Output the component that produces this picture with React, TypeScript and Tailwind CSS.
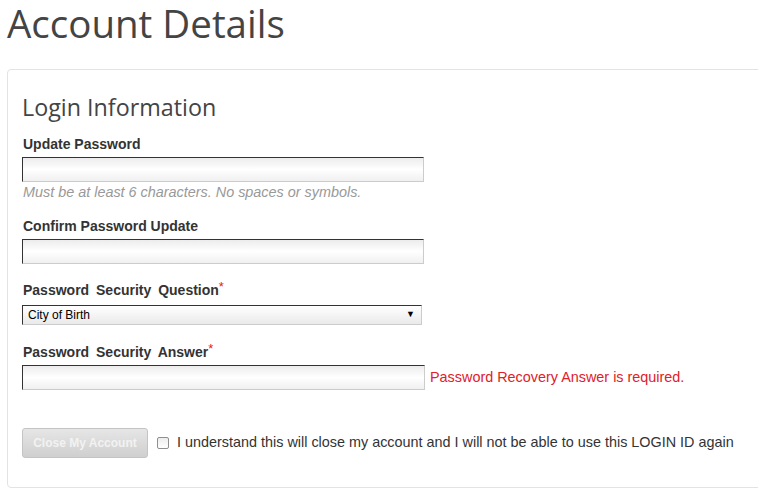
const App = () => {
  return (
    <div className="w-[758px] h-[493px] overflow-hidden bg-white font-['Liberation_Sans',Arial,sans-serif]">
      {/* Page title */}
      <div className="h-[69px] pl-[7px]">
        <h1 className="text-[38.5px] leading-[46px] text-[#444] font-['Open_Sans',sans-serif] font-normal">
          Account Details
        </h1>
      </div>

      {/* Panel */}
      <div className="ml-[7px] w-[770px] h-[419px] border border-[#e3e3e3] rounded-[4px] pl-[14px] pt-[22px]">
        <h2 className="text-[23.3px] leading-[30px] text-[#444] font-['Open_Sans',sans-serif] mb-[14px]">
          Login Information
        </h2>

        {/* Update Password */}
        <label className="block pl-[1px] text-[14px] leading-[16px] font-bold text-[#333]">Update Password</label>
        <input
          type="password"
          className="block mt-[5px] w-[402px] h-[25px] border border-t-[#333] border-l-[#333] border-r-[#ccc] border-b-[#ccc] bg-gradient-to-b from-[#ececec] via-white to-[#f0f0f0]"
        />
        <p className="mt-[2px] pl-[1px] text-[14.4px] leading-[16px] italic text-[#999]">
          Must be at least 6 characters. No spaces or symbols.
        </p>

        {/* Confirm Password */}
        <label className="block mt-[18px] pl-[1px] text-[14px] leading-[16px] font-bold text-[#333]">
          Confirm Password Update
        </label>
        <input
          type="password"
          className="block mt-[5px] w-[402px] h-[25px] border border-t-[#333] border-l-[#333] border-r-[#ccc] border-b-[#ccc] bg-gradient-to-b from-[#ececec] via-white to-[#f0f0f0]"
        />

        {/* Security Question */}
        <label className="block mt-[18px] pl-[1px] text-[14px] leading-[16px] font-bold text-[#333] [word-spacing:3px]">
          Password Security Question<span className="text-[#e0202a] font-normal align-top text-[13px] leading-[10px]">*</span>
        </label>
        <div className="mt-[7px] w-[400px] h-[20px] flex items-center justify-between border border-t-[#333] border-l-[#333] border-r-[#ccc] border-b-[#ccc] bg-gradient-to-b from-white to-[#eaeaea] pl-[5px] pr-[6px] text-[12px] text-black">
          <span>City of Birth</span>
          <span className="text-[9px]">▼</span>
        </div>

        {/* Security Answer */}
        <label className="block mt-[19px] pl-[1px] text-[14px] leading-[16px] font-bold text-[#333] [word-spacing:3px]">
          Password Security Answer<span className="text-[#e0202a] font-normal align-top text-[13px] leading-[10px]">*</span>
        </label>
        <div className="mt-[5px] flex items-center gap-[5px]">
          <input
            type="text"
            className="block w-[403px] h-[25px] border border-t-[#333] border-l-[#333] border-r-[#ccc] border-b-[#ccc] bg-gradient-to-b from-[#ececec] via-white to-[#f0f0f0]"
          />
          <span className="text-[14.4px] text-[#e0202a]">Password Recovery Answer is required.</span>
        </div>

        {/* Close account */}
        <div className="mt-[38px] flex items-center">
          <button
            disabled
            className="w-[126px] h-[30px] rounded-[3px] border border-[#c4c4c4] bg-gradient-to-b from-[#e6e6e6] to-[#cfcfcf] text-[12px] font-bold text-[#f2f2f2]"
          >
            Close My Account
          </button>
          <span className="ml-[9px] w-[12px] h-[12px] border border-[#8f8f8f] rounded-[2px] bg-gradient-to-b from-[#ededed] to-white" />
          <span className="ml-[8px] text-[14.4px] text-[#333]">
            I understand this will close my account and I will not be able to use this LOGIN ID again
          </span>
        </div>
      </div>
    </div>
  );
};

export default App;
